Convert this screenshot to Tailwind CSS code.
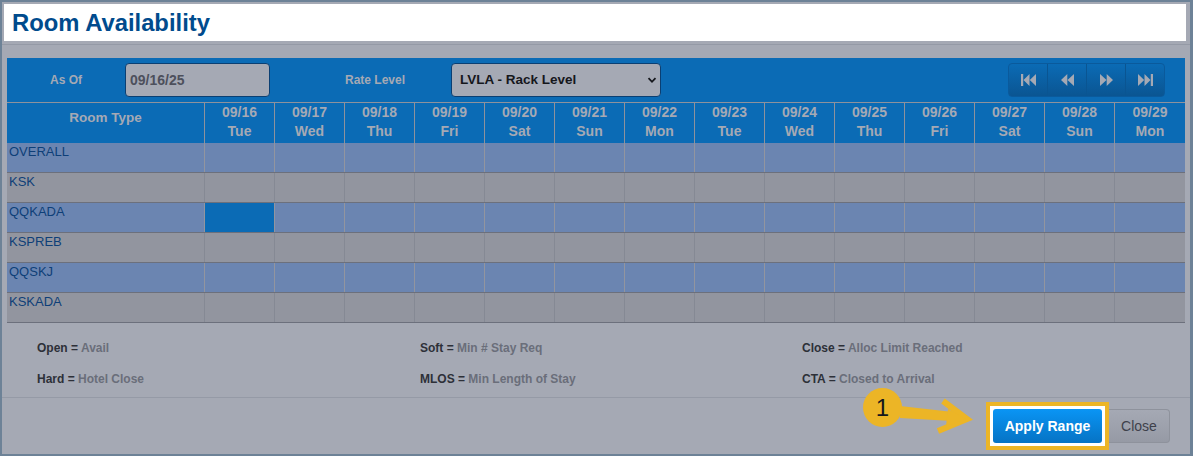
<!DOCTYPE html>
<html lang="en">
<head>
  <meta charset="UTF-8">
  <title>Room Availability</title>
  <script src="https://cdn.jsdelivr.net/npm/@tailwindcss/browser@4"></script>
</head>
<body class="m-0 w-[1193px] h-[456px] overflow-hidden bg-[#6d8297] font-['Liberation_Sans',Arial,sans-serif]">
  <div class="absolute left-[2px] top-[2px] w-[1188px] h-[452px] bg-[#a5a9b4] pt-[2px]">
    <!-- title -->
    <div class="ml-[2px] h-[37px] w-[1182px] bg-white flex items-center pl-[8px] pt-[1px]">
      <h1 class="text-[23.8px] leading-none font-bold text-[#004b8d]">Room Availability</h1>
    </div>
    <div class="mt-[3px] h-px bg-[#959aa6]"></div>

    <div class="ml-[5px] mt-[13px] w-[1178px]">
      <!-- toolbar -->
      <div class="h-[44px] bg-[#0b6bb5] flex items-center relative">
        <span class="w-[118px] pl-[43px] text-[12px] font-bold text-[#a5a9b4]">As Of</span>
        <div class="w-[145px] h-[34px] rounded-[4px] border border-[#0a3f73] bg-[#a5a9b4] flex items-center pl-[4px] text-[14px] font-bold text-[#4d505c]">09/16/25</div>
        <span class="ml-[75px] w-[106px] text-[12px] font-bold text-[#a5a9b4]">Rate Level</span>
        <div class="w-[210px] h-[34px] rounded-[4px] border border-[#0a3f73] bg-[#a5a9b4] flex items-center justify-between pl-[8px] pr-[3px] text-[13.5px] font-bold text-[#15171c]">
          <span>LVLA - Rack Level</span>
          <svg width="10" height="10" viewBox="0 0 10 10"><path d="M1.5 3.2 5 6.8 8.5 3.2" fill="none" stroke="#15171c" stroke-width="1.8"/></svg>
        </div>
        <div class="ml-auto mr-[20px] w-[157px] h-[34px] flex rounded-[4px] border border-[#0a5a9c] bg-gradient-to-b from-[#0b6bb5] to-[#0a5592]">
          <div class="flex-1 flex items-center justify-center border-r border-[#0a5592]">
            <svg width="15" height="12" viewBox="0 0 15 12" fill="#a5a9b4"><path d="M0 0h2.2v12H0zM2.5 6 8.5 0v12zM8.8 6 15 0v12z"/></svg>
          </div>
          <div class="flex-1 flex items-center justify-center border-r border-[#0a5592]">
            <svg width="13" height="12" viewBox="0 0 13 12" fill="#a5a9b4"><path d="M0 6 6.3 0v12zM6.5 6 13 0v12z"/></svg>
          </div>
          <div class="flex-1 flex items-center justify-center border-r border-[#0a5592]">
            <svg width="13" height="12" viewBox="0 0 13 12" fill="#a5a9b4"><path d="M13 6 6.7 0v12zM6.5 6 0 0v12z"/></svg>
          </div>
          <div class="flex-1 flex items-center justify-center">
            <svg width="15" height="12" viewBox="0 0 15 12" fill="#a5a9b4"><path d="M15 0h-2.2v12H15zM12.5 6 6.5 0v12zM6.2 6 0 0v12z"/></svg>
          </div>
        </div>
      </div>

      <!-- grid header -->
      <div class="grid grid-cols-[197px_repeat(13,70px)_71px] h-[41px] bg-[#0b6bb5] border-t border-[#8e929c] text-[14px] font-bold text-[#a5a9b4] text-center leading-[19px]">
        <div class="pt-[7px] text-[13.5px] leading-[15px]">Room Type</div>
        <div class="border-l border-[#8e929c]"><div>09/16</div><div>Tue</div></div>
        <div class="border-l border-[#8e929c]"><div>09/17</div><div>Wed</div></div>
        <div class="border-l border-[#8e929c]"><div>09/18</div><div>Thu</div></div>
        <div class="border-l border-[#8e929c]"><div>09/19</div><div>Fri</div></div>
        <div class="border-l border-[#8e929c]"><div>09/20</div><div>Sat</div></div>
        <div class="border-l border-[#8e929c]"><div>09/21</div><div>Sun</div></div>
        <div class="border-l border-[#8e929c]"><div>09/22</div><div>Mon</div></div>
        <div class="border-l border-[#8e929c]"><div>09/23</div><div>Tue</div></div>
        <div class="border-l border-[#8e929c]"><div>09/24</div><div>Wed</div></div>
        <div class="border-l border-[#8e929c]"><div>09/25</div><div>Thu</div></div>
        <div class="border-l border-[#8e929c]"><div>09/26</div><div>Fri</div></div>
        <div class="border-l border-[#8e929c]"><div>09/27</div><div>Sat</div></div>
        <div class="border-l border-[#8e929c]"><div>09/28</div><div>Sun</div></div>
        <div class="border-l border-[#8e929c]"><div>09/29</div><div>Mon</div></div>
      </div>

      <!-- rows -->
      <div id="rows" class="text-[13px] leading-[15px] text-[#0e3f78]"></div>
    </div>

    <!-- legend -->
    <div class="grid grid-cols-[383px_382px_1fr] ml-[35px] mt-[18px] text-[12px] leading-[14px] font-bold text-[#2d3038] gap-y-[17px]">
      <div>Open = <span class="text-[#6a6e7a]">Avail</span></div>
      <div>Soft = <span class="text-[#6a6e7a]">Min # Stay Req</span></div>
      <div>Close = <span class="text-[#6a6e7a]">Alloc Limit Reached</span></div>
      <div>Hard = <span class="text-[#6a6e7a]">Hotel Close</span></div>
      <div>MLOS = <span class="text-[#6a6e7a]">Min Length of Stay</span></div>
      <div>CTA = <span class="text-[#6a6e7a]">Closed to Arrival</span></div>
    </div>
    <div class="mt-[11px] h-px bg-[#959aa6]"></div>

    <!-- footer -->
    <div class="flex justify-end items-center mt-[4px] pr-[20px]">
      <div class="border-[4px] border-[#ecb526] bg-white p-[3px] w-[123px] h-[48px]">
        <button class="w-full h-full rounded-[3px] bg-gradient-to-b from-[#0a95f5] to-[#0673c4] text-white text-[14px] font-bold">Apply Range</button>
      </div>
      <button class="w-[61px] h-[34px] rounded-r-[4px] border border-l-0 border-[#8e929c] bg-gradient-to-b from-[#a5a9b4] to-[#969aa5] text-[14px] text-[#3e414b]">Close</button>
    </div>

    <!-- callout arrow and badge -->
    <svg class="absolute left-[898px] top-[396px]" width="76" height="38" viewBox="0 0 76 38">
      <path d="M0 8 53 14 52 23 0 20z" fill="#ecb526"/>
      <path d="M43 3 67 21 38 33" stroke="#ecb526" stroke-width="6" fill="none"/>
      <path d="M48 11 66 21 46 28z" fill="#ecb526"/>
    </svg>
    <div class="absolute left-[861px] top-[386px] w-[39px] h-[39px] rounded-full bg-[#ecb526] flex items-center justify-center pt-[1px] text-[24px] text-[#15171c]">1</div>
  </div>
  <script>
    // rows are plain markup, colours listed in full so Tailwind sees them
    const rows = ["OVERALL", "KSK", "QQKADA", "KSPREB", "QQSKJ", "KSKADA"];
    const html = rows.map((name, i) => {
      const bg = i % 2 === 0 ? "bg-[#6b85b1]" : "bg-[#92959f]";
      const line = i % 2 === 0 ? "border-[#92959f]" : "border-[#858994]";
      let cells = "";
      for (let c = 0; c < 14; c++) {
        const hi = i === 2 && c === 0 ? "bg-[#0b6bb5]" : "";
        cells += `<div class="border-l ${line} ${hi}"></div>`;
      }
      return `<div class="grid grid-cols-[197px_repeat(13,70px)_71px] h-[30px] ${bg} border-b border-[#6c707c]"><div class="pl-[2px] pt-[1px]">${name}</div>${cells}</div>`;
    }).join("");
    document.getElementById("rows").innerHTML = html;
  </script>
</body>
</html>
